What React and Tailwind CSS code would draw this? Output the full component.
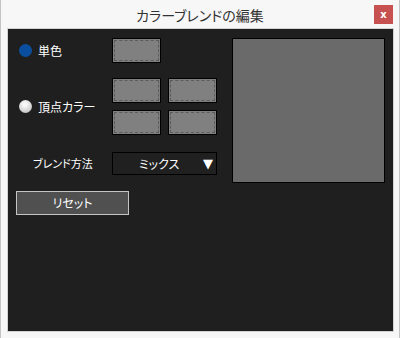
const FONT = "font-['Meiryo_UI','Noto_Sans_CJK_JP',sans-serif] [font-feature-settings:'palt']";

function Swatch() {
  return (
    <div className="w-[49px] h-[25px] border border-black bg-[#808080] p-px">
      <div className="w-full h-full border border-dashed border-[#5c5c5c]" />
    </div>
  );
}

export default function App() {
  return (
    <div className={`w-[400px] h-[338px] bg-[#f7f7f7] border-l border-r border-[#c4c4c4] flex flex-col ${FONT}`}>
      {/* Title bar */}
      <div className="h-[28px] shrink-0 flex items-center relative">
        <div className="flex-1 text-center text-[14px] text-[#333333] pt-[2px]">カラーブレンドの編集</div>
        <div className="absolute right-[6px] top-[5px] w-[19px] h-[19px] bg-[#c75050] flex items-center justify-center text-white text-[10px] font-bold leading-none font-['DejaVu_Sans',sans-serif]">
          x
        </div>
      </div>

      {/* Body */}
      <div className="ml-[6px] w-[387px] h-[304px] border border-[#d2d2d2] bg-[#1f1f1f] pl-[8px] pt-[9px] flex gap-[15px] text-white">
        <div className="w-[201px] flex flex-col">
          {/* single colour */}
          <div className="flex items-center h-[25px]">
            <div className="w-[96px] flex items-center pl-[3px] gap-[6px]">
              <span className="w-[13px] h-[13px] rounded-full bg-[#0a4f9f]" />
              <span className="text-[12px]">単色</span>
            </div>
            <Swatch />
          </div>

          {/* vertex colours */}
          <div className="flex items-center mt-[15px]">
            <div className="w-[96px] flex items-center pl-[3px] gap-[6px]">
              <span className="w-[13px] h-[13px] rounded-full bg-[radial-gradient(circle_at_45%_35%,#f8f8f8_15%,#d4d4d4_60%,#a0a0a0)]" />
              <span className="text-[12px]">頂点カラー</span>
            </div>
            <div className="grid grid-cols-2 gap-x-[7px] gap-y-[7px]">
              <Swatch />
              <Swatch />
              <Swatch />
              <Swatch />
            </div>
          </div>

          {/* blend method */}
          <div className="flex items-center mt-[17px]">
            <div className="w-[96px] pl-[17px] text-[11px]">ブレンド方法</div>
            <div className="w-[105px] h-[23px] border border-black bg-[#202020] flex items-center pr-[3px]">
              <span className="flex-1 text-center text-[12px] pl-[2px]">ミックス</span>
              <span className="text-[13px] leading-none font-['DejaVu_Sans',sans-serif]">▼</span>
            </div>
          </div>

          {/* reset */}
          <button className="mt-[16px] w-[113px] h-[24px] border border-[#c4c4c4] bg-[#505050] text-[12px] text-white">
            リセット
          </button>
        </div>

        {/* preview */}
        <div className="w-[153px] h-[145px] border border-black bg-[#6a6a6a]" />
      </div>
    </div>
  );
}
